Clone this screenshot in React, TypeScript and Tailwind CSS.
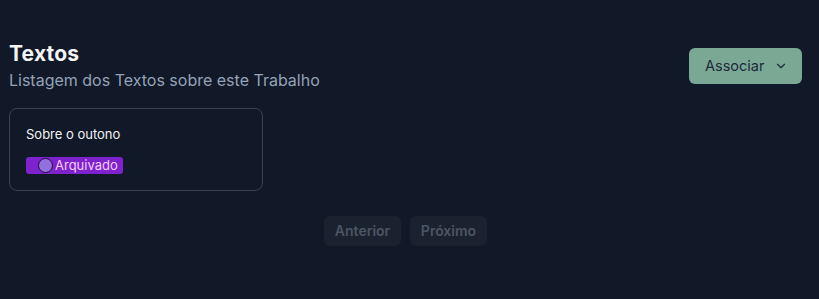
import { ChevronDown } from "lucide-react";

export default function App() {
  return (
    <div
      className="min-h-[299px] w-full bg-[#111827] pl-[9px] pr-[17px] pt-[40px]"
      style={{ fontFamily: "Inter, 'Noto Sans', sans-serif" }}
    >
      {/* Header */}
      <div className="flex items-center justify-between">
        <div>
          <h1 className="text-[21px] font-bold leading-7 tracking-[0.01em] text-[#f3f4f6]">Textos</h1>
          <p className="text-base leading-6 text-[#94a3b8]">Listagem dos Textos sobre este Trabalho</p>
        </div>
        <button className="flex h-9 w-[113px] items-center gap-[10px] rounded-md bg-[#7aa895] pl-4 text-[14.5px] text-[#1e293b]">
          Associar
          <ChevronDown className="h-[14px] w-[14px]" strokeWidth={2} />
        </button>
      </div>

      {/* Cards */}
      <div className="mt-4 grid grid-cols-3 gap-4">
        <div className="flex flex-col items-start rounded-lg border border-[#374151] p-4">
          <div className="text-[13px] leading-[18px] text-[#f3f4f6]">Sobre o outono</div>
          <div className="mt-[14px] flex h-[17px] w-[97px] items-center gap-[2px] rounded-[3px] bg-[#7e22ce] pl-[12px] text-[13px] leading-none text-[#f5d0fe]">
            <span className="h-[15px] w-[15px] rounded-full border border-[#1e0a3c] bg-[#9370db]" />
            Arquivado
          </div>
        </div>
      </div>

      {/* Pagination */}
      <div className="mt-[25px] flex justify-center gap-[9px]">
        <button disabled className="h-[30px] w-[77px] rounded-md bg-[#1a2230] text-sm font-semibold text-[#4b5563]">
          Anterior
        </button>
        <button disabled className="h-[30px] w-[77px] rounded-md bg-[#1a2230] text-sm font-semibold text-[#4b5563]">
          Próximo
        </button>
      </div>
    </div>
  );
}
